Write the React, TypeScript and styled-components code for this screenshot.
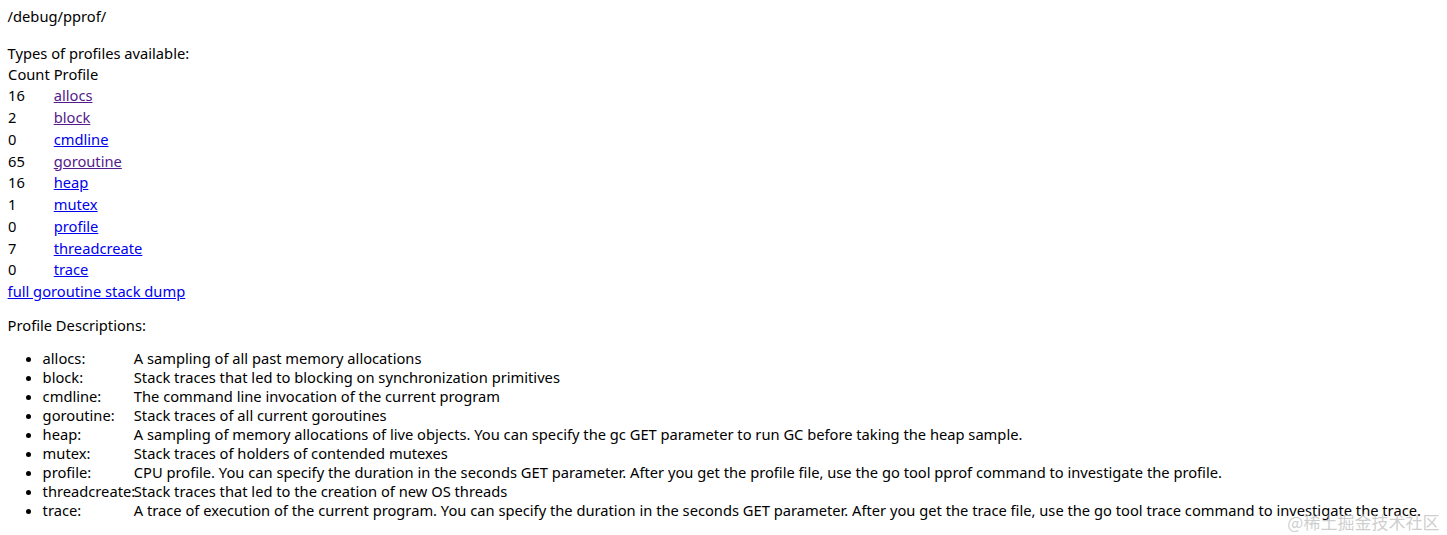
import React from 'react'
import styled, { createGlobalStyle } from 'styled-components'

const GlobalStyle = createGlobalStyle`
    html, body {
        margin: 0;
        padding: 0;
        background: #fff;
    }
    body {
        padding: 7px 7.6px;
        font-family: "Noto Sans", "Noto Sans CJK SC", sans-serif;
        font-size: 14.7px;
        line-height: 18.5px;
        color: #000;
    }
`

const Page = styled.div`
    position: relative;
    height: 521px;
`

const Table = styled.table`
    border-spacing: 2px;
    margin-left: -2.5px;
    font-size: 14.7px;
`

const Cell = styled.td`
    padding: 1px;
    line-height: 17.75px;
    vertical-align: top;
`

const Link = styled.a<{ $visited?: boolean }>`
    color: ${props => (props.$visited ? '#551a8b' : '#0000ee')};
    text-decoration: underline;
`

const Para = styled.p`
    margin: 15.2px 0;
`

const List = styled.ul`
    margin: 15.2px 0;
    padding-left: 35px;
`

const Item = styled.li`
    line-height: 19px;
    white-space: nowrap;
`

const Name = styled.div`
    display: inline-block;
    width: 91.2px;
`

const Watermark = styled.div`
    position: absolute;
    right: 0;
    bottom: -3px;
    font-size: 17px;
    color: rgba(190, 190, 190, 0.75);
    font-family: "Noto Sans CJK SC", sans-serif;
    pointer-events: none;
`

const profiles = [
    { count: 16, name: 'allocs', visited: true },
    { count: 2, name: 'block', visited: true },
    { count: 0, name: 'cmdline', visited: false },
    { count: 65, name: 'goroutine', visited: true },
    { count: 16, name: 'heap', visited: false },
    { count: 1, name: 'mutex', visited: false },
    { count: 0, name: 'profile', visited: false },
    { count: 7, name: 'threadcreate', visited: false },
    { count: 0, name: 'trace', visited: false },
]

const descriptions = [
    ['allocs', 'A sampling of all past memory allocations'],
    ['block', 'Stack traces that led to blocking on synchronization primitives'],
    ['cmdline', 'The command line invocation of the current program'],
    ['goroutine', 'Stack traces of all current goroutines'],
    ['heap', 'A sampling of memory allocations of live objects. You can specify the gc GET parameter to run GC before taking the heap sample.'],
    ['mutex', 'Stack traces of holders of contended mutexes'],
    ['profile', 'CPU profile. You can specify the duration in the seconds GET parameter. After you get the profile file, use the go tool pprof command to investigate the profile.'],
    ['threadcreate', 'Stack traces that led to the creation of new OS threads'],
    ['trace', 'A trace of execution of the current program. You can specify the duration in the seconds GET parameter. After you get the trace file, use the go tool trace command to investigate the trace.'],
]

export default function App() {
    return (
        <Page>
            <GlobalStyle />
            /debug/pprof/<br />
            <br />
            Types of profiles available:
            <Table>
                <thead>
                    <tr>
                        <Cell>Count</Cell>
                        <Cell>Profile</Cell>
                    </tr>
                </thead>
                <tbody>
                    {profiles.map(p => (
                        <tr key={p.name}>
                            <Cell>{p.count}</Cell>
                            <Cell>
                                <Link href="#" $visited={p.visited}>{p.name}</Link>
                            </Cell>
                        </tr>
                    ))}
                </tbody>
            </Table>
            <Link href="#">full goroutine stack dump</Link>
            <br />
            <Para>Profile Descriptions:</Para>
            <List>
                {descriptions.map(([name, text]) => (
                    <Item key={name}>
                        <Name>{name}: </Name>{text}
                    </Item>
                ))}
            </List>
            <Watermark>@稀土掘金技术社区</Watermark>
        </Page>
    )
}
